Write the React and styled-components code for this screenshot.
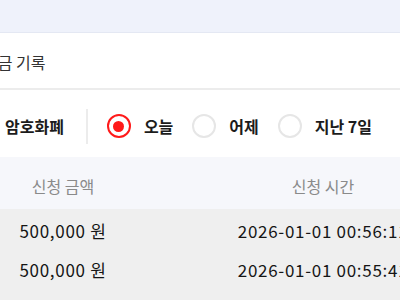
import React from "react";
import styled, { createGlobalStyle } from "styled-components";

const GlobalStyle = createGlobalStyle`
    html, body {
        margin: 0;
        padding: 0;
        width: 400px;
        height: 300px;
        overflow: hidden;
        background: #ffffff;
        font-family: "Noto Sans CJK KR", "Noto Sans", sans-serif;
    }
`;

const Page = styled.div`
    width: 400px;
    height: 300px;
    overflow: hidden;
    display: flex;
    flex-direction: column;
`;

const TopBand = styled.div`
    height: 32px;
    flex-shrink: 0;
    background: #eff2fb;
    border-bottom: 1px solid #e4e8f3;
`;

const TitleBar = styled.div`
    height: 57px;
    flex-shrink: 0;
    display: flex;
    align-items: center;
    margin-left: -17px;
    font-size: 16px;
    color: #333;
    border-bottom: 2px solid #ececec;
    padding-top: 3px;
    box-sizing: border-box;
`;

const FilterRow = styled.div`
    height: 67px;
    flex-shrink: 0;
    display: flex;
    align-items: center;
    padding: 5px 0 0 5px;
    box-sizing: border-box;
    font-size: 16px;
    font-weight: 700;
    color: #1c1c1c;
    white-space: nowrap;
`;

const Divider = styled.div`
    width: 2px;
    height: 35px;
    background: #ececec;
    margin: 0 19px 0 22px;
`;

const Option = styled.label`
    display: flex;
    align-items: center;
    gap: 13px;
    margin-right: 19px;
`;

const RadioMark = styled.span`
    width: 24px;
    height: 24px;
    box-sizing: border-box;
    border-radius: 50%;
    border: 2px solid ${(p) => (p.checked ? "#ff1a1a" : "#e6e6e6")};
    display: flex;
    align-items: center;
    justify-content: center;

    &::after {
        content: "";
        width: 11px;
        height: 11px;
        border-radius: 50%;
        background: ${(p) => (p.checked ? "#ff1a1a" : "transparent")};
    }
`;

const Grid = styled.div`
    display: grid;
    grid-template-columns: 126px 394px;
    align-items: center;
    white-space: nowrap;
`;

const HeaderRow = styled(Grid)`
    height: 52px;
    flex-shrink: 0;
    background: #f6f7fb;
    color: #8a8a8a;
    font-size: 16px;
    padding-top: 5px;
    box-sizing: border-box;
`;

const TableBody = styled.div`
    flex: 1;
    background: #efefef;
`;

const DataRow = styled(Grid)`
    height: 39px;
    color: #151515;
    font-size: 17px;
    letter-spacing: 0.7px;
    padding-top: 4px;
    box-sizing: border-box;
`;

const Cell = styled.div`
    text-align: center;
`;

const options = [
    { label: "오늘", checked: true },
    { label: "어제", checked: false },
    { label: "지난 7일", checked: false },
];

const rows = [
    { amount: "500,000 원", time: "2026-01-01 00:56:11" },
    { amount: "500,000 원", time: "2026-01-01 00:55:41" },
];

export default function App() {
    return (
        <Page>
            <GlobalStyle />
            <TopBand />
            <TitleBar>입금 기록</TitleBar>
            <FilterRow>
                <span>암호화폐</span>
                <Divider />
                {options.map((o) => (
                    <Option key={o.label}>
                        <RadioMark checked={o.checked} />
                        <span>{o.label}</span>
                    </Option>
                ))}
            </FilterRow>
            <HeaderRow>
                <Cell>신청 금액</Cell>
                <Cell>신청 시간</Cell>
            </HeaderRow>
            <TableBody>
                {rows.map((r, i) => (
                    <DataRow key={i}>
                        <Cell>{r.amount}</Cell>
                        <Cell>{r.time}</Cell>
                    </DataRow>
                ))}
            </TableBody>
        </Page>
    );
}
